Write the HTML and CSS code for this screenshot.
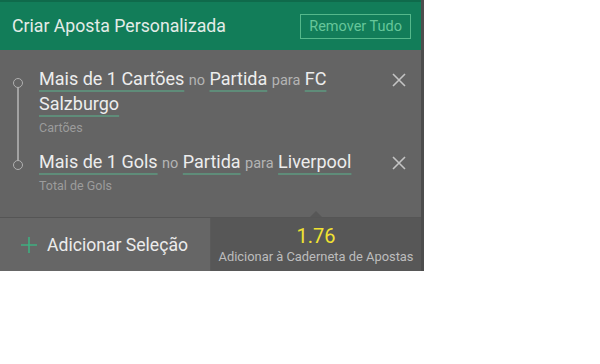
FILE: index.html
```html
<!DOCTYPE html>
<html lang="pt">
<head>
<meta charset="utf-8">
<title>Criar Aposta Personalizada</title>
<link rel="stylesheet" href="styles.css">
</head>
<body>
<div class="panel">
  <header class="head">
    <h1 class="title">Criar Aposta Personalizada</h1>
    <button class="remove-all">Remover Tudo</button>
  </header>
  <div class="list">
    <div class="sel">
      <span class="dot"></span>
      <div class="sel-body">
        <p class="sel-text"><span class="u">Mais de 1 Cartões</span> <span class="small">no</span> <span class="u">Partida</span> <span class="small">para</span> <span class="u">FC Salzburgo</span></p>
        <p class="sel-sub">Cartões</p>
      </div>
      <button class="close" aria-label="Remover"><svg width="16" height="16" viewBox="0 0 16 16"><path d="M2 2L14 14M14 2L2 14" stroke="#c4c4c4" stroke-width="1.6" fill="none"/></svg></button>
    </div>
    <div class="sel">
      <span class="dot"></span>
      <div class="sel-body">
        <p class="sel-text"><span class="u">Mais de 1 Gols</span> <span class="small">no</span> <span class="u">Partida</span> <span class="small">para</span> <span class="u">Liverpool</span></p>
        <p class="sel-sub">Total de Gols</p>
      </div>
      <button class="close" aria-label="Remover"><svg width="16" height="16" viewBox="0 0 16 16"><path d="M2 2L14 14M14 2L2 14" stroke="#c4c4c4" stroke-width="1.6" fill="none"/></svg></button>
    </div>
  </div>
  <footer class="foot">
    <button class="add">
      <svg width="16" height="16" viewBox="0 0 16 16"><path d="M8 0V16M0 8H16" stroke="#3fae80" stroke-width="1.6" fill="none"/></svg>
      <span>Adicionar Seleção</span>
    </button>
    <button class="slip">
      <span class="odds">1.76</span>
      <span class="slip-label">Adicionar à Caderneta de Apostas</span>
    </button>
  </footer>
</div>
</body>
</html>
```
FILE: styles.css
```css
* { box-sizing: border-box; }
body {
  margin: 0;
  background: #ffffff;
  font-family: Roboto, "Noto Sans", sans-serif;
}
.panel {
  width: 424px;
  border-right: 3px solid #4d4d4d;
  background: #646464;
}
.head {
  height: 50px;
  background: #127d59;
  border-top: 2px solid #0f6a4b;
  display: flex;
  align-items: center;
  justify-content: space-between;
  padding: 0 10px 0 12px;
}
.title {
  margin: 0;
  font-size: 17.7px;
  font-weight: 400;
  color: #e4ece8;
}
.remove-all {
  height: 25px;
  padding: 0 8px;
  border: 1px solid #55b88b;
  background: transparent;
  color: #66c69a;
  font-family: inherit;
  font-size: 14.5px;
}
.list {
  position: relative;
  padding: 16px 0 22px;
  display: flex;
  flex-direction: column;
  gap: 12px;
}
.list::before {
  content: "";
  position: absolute;
  left: 17px;
  top: 37px;
  height: 76px;
  width: 2px;
  background: #a2a2a2;
}
.sel {
  position: relative;
  display: flex;
  align-items: flex-start;
  padding-left: 39px;
}
.dot {
  position: absolute;
  left: 13px;
  top: 12px;
  width: 10px;
  height: 10px;
  border: 1.5px solid #b0b0b0;
  border-radius: 50%;
  background: #646464;
}
.sel:last-child .dot { top: 11px; }
.sel-body { flex: 1; }
.sel-text {
  margin: 0;
  width: 320px;
  font-size: 18px;
  line-height: 25px;
  color: #ededed;
}
.u {
  text-decoration: underline;
  text-decoration-color: #5f8c79;
  text-decoration-thickness: 2px;
  text-underline-offset: 5px;
}
.small {
  font-size: 14.5px;
  line-height: 20px;
  color: #b4b4b4;
}
.sel-sub {
  margin: 3px 0 0;
  font-size: 12.5px;
  line-height: 18px;
  color: #9c9c9c;
}
.close {
  margin: 6px 14px 0 0;
  padding: 0;
  border: 0;
  background: transparent;
  width: 16px;
  height: 16px;
}
.foot {
  height: 54px;
  display: flex;
  border-top: 1px solid #555555;
}
.add {
  width: 210px;
  display: flex;
  align-items: center;
  gap: 10px;
  padding: 0 0 0 21px;
  border: 0;
  background: #666666;
  color: #ececec;
  font-family: inherit;
  font-size: 17.6px;
}
.slip {
  position: relative;
  flex: 1;
  display: flex;
  flex-direction: column;
  align-items: center;
  justify-content: center;
  gap: 3px;
  border: 0;
  border-left: 1px solid #5a5a5a;
  background: #575757;
  font-family: inherit;
}
.slip::before {
  content: "";
  position: absolute;
  top: -7px;
  left: 50%;
  margin-left: -6px;
  border-left: 6px solid transparent;
  border-right: 6px solid transparent;
  border-bottom: 6px solid #575757;
}
.odds {
  font-size: 20px;
  line-height: 22px;
  color: #f1e232;
}
.slip-label {
  font-size: 12.9px;
  line-height: 14px;
  color: #bdbdbd;
}
```
